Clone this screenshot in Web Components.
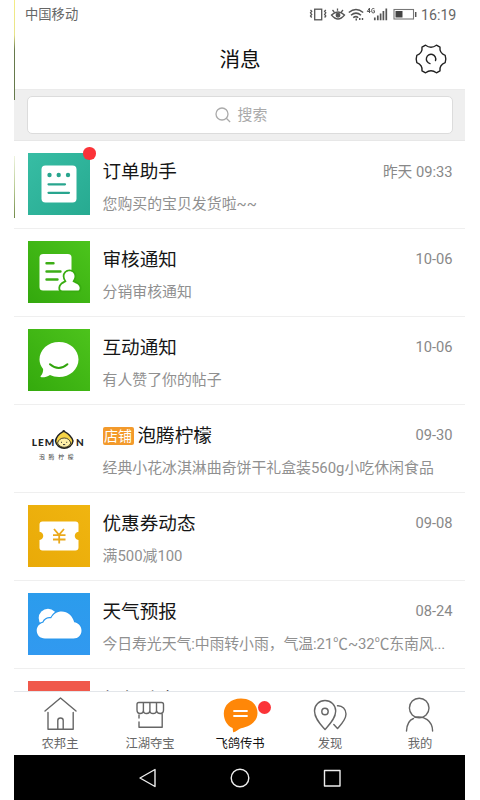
<!DOCTYPE html>
<html lang="zh-CN">
<head>
<meta charset="utf-8">
<title>消息</title>
<style>
html,body{margin:0;height:800px;background:#fff;overflow:hidden}
body{font-family:Roboto,"Noto Sans CJK SC",sans-serif}
</style>
</head>
<body>
<message-app></message-app>
<script>
const define = (name, html, setup) => customElements.define(name, class extends HTMLElement {
  constructor(){
    super();
    const t = document.createElement('template');
    t.innerHTML = html;
    this.attachShadow({mode:'open'}).append(t.content.cloneNode(true));
  }
  connectedCallback(){ if(setup) setup(this, this.shadowRoot); }
});

define('status-bar', `<style>
:host{display:flex;align-items:center;height:29px;padding:0 9px 0 11px;color:#666;font-size:13.3px;line-height:30px}
.carrier{flex:1}
svg{display:block;margin-right:4px}
.time{font-size:14.2px;width:35px;white-space:nowrap}
</style>
<span class="carrier">中国移动</span>
<svg width="108" height="20" viewBox="309 4.500 108 20" fill="none" stroke="#555" stroke-width="1.3">
  <rect x="314.7" y="8.7" width="7" height="10.6"/>
  <path d="M310.5 9.5l1.2 1.3-1.2 1.5 1.2 1.6-1.2 1.5 1.2 1.6M325.8 9.5l-1.2 1.3 1.2 1.5-1.2 1.6 1.2 1.5-1.2 1.6"/>
  <path d="M331.5 14.5q6.5-6 13 0q-6.500 8-13 0zM337.500 8v2.300M332.500 9.500l1.700 2M343 9.500l-1.700 2"/>
  <circle cx="338" cy="14.800" r="1.800" fill="#555"/>
  <path d="M348.800 12q7.200-6 14.400 0M351 14.700q5-4.200 10 0M353.200 17.200q2.800-2.200 5 0" stroke-width="1.500"/>
  <path d="M355.500 19h1.500M359 18.500h1.500M361.800 18.500h1.400" stroke-width="2"/>
  <path d="M374.800 17v2.700M377.800 15v4.700M380.600 13v6.700M383.400 10.500v9.200M386.300 8v11.700" stroke-width="1.700"/>
  <rect x="394" y="9" width="19.500" height="9.500" stroke="#777" stroke-width="1.100"/>
  <path d="M395.500 10.500h7v6.500h-7z" fill="#444" stroke="none"/>
  <path d="M415.700 11.500v5" stroke-width="1.500"/>
  <path d="M369.500 12.500V7.500l-2.200 3.500h3.200M374.400 8.300q-2.700-1.200-2.700 1.900t2.700 1.900v-1.900h-1.100" stroke-width="1"/>
</svg>
<span class="time">16:19</span>`);

define('page-header', `<style>
:host{display:grid;grid-template-columns:1fr auto 1fr;align-items:center;height:61px;box-sizing:border-box;border-bottom:1px solid #ebebeb}
h1{grid-column:2;margin:2px 0 0 1px;font-size:20.6px;font-weight:400;line-height:30px;color:#111}
svg{justify-self:end;margin-right:17px;display:block}
</style>
<h1><slot></slot></h1>
<svg width="34" height="34" viewBox="0 0 34 34" fill="none" stroke="#222" stroke-width="1.400" stroke-linejoin="round" stroke-linecap="round">
  <path d="M11.600 3.200Q17 7.200 22.400 3.200L26 5.200C25.500 9 27.500 12 31.200 13.400Q32.400 17 31.200 20.600C27.500 22 25.500 25 26 28.800L22.400 30.800Q17 26.800 11.600 30.800L8 28.800C8.500 25 6.500 22 2.800 20.600Q1.600 17 2.800 13.400C6.500 12 8.500 9 8 5.200Z"/>
  <path d="M16 21.600A4.700 4.700 0 1 1 21.500 18.500"/>
</svg>`);

define('search-bar', `<style>
:host{display:block;background:#efefef;height:51px;box-sizing:border-box;padding:6px 12px 7px 13px;border-bottom:1px solid #e7e7e7}
div{height:38px;box-sizing:border-box;border:1px solid #dcdcdc;border-radius:5px;background:#fff;display:flex;align-items:center;justify-content:center;gap:7px;font-size:14.900px;color:#aaa;line-height:37px;padding-left:2px}
span{padding-top:1px}
svg{display:block}
</style>
<div><svg width="16" height="16" viewBox="0 0 16 16" fill="none" stroke="#aaa" stroke-width="1.300"><circle cx="7" cy="7" r="6"/><path d="M11.300 11.300l3.800 3.700"/></svg><span><slot></slot></span></div>`);

const art = {
order:`<defs><linearGradient id="g" x2="1" y2="1"><stop stop-color="#37bda4"/><stop offset="1" stop-color="#27aa91"/></linearGradient></defs><path fill="url(#g)" d="M0 0h62v62H0z"/><rect x="13.500" y="12.500" width="35" height="37" rx="4" fill="#fff"/><g fill="#28a58e"><circle cx="21.500" cy="22" r="2.200"/><circle cx="30.700" cy="22" r="2.200"/><circle cx="40" cy="22" r="2.200"/></g><path d="M20.500 31.300h16.500M20.500 39.800H41" stroke="#28a58e" stroke-width="2.200" stroke-linecap="round"/>`,
audit:`<defs><linearGradient id="g" x1="1" x2="0" y2="1"><stop stop-color="#4cc41c"/><stop offset="1" stop-color="#33a80d"/></linearGradient></defs><path fill="url(#g)" d="M0 0h62v62H0z"/><rect x="11.500" y="13" width="32" height="36.500" rx="3.500" fill="#fff"/><path d="M18.500 22.300h7M18.500 30.500h14M18.500 38.500h11" stroke="#3cae16" stroke-width="2.400" stroke-linecap="round"/><path d="M41.500 30.300c3 0 5 2.200 5 4.900 0 2-1.100 3.600-2 5 0 1.500 6.700 2 7.200 6.500 0 2.200-.8 2.800-2 2.800H34.500c-1.800 0-2.500-1-2.300-2.800.5-4.500 6.300-5 6.300-6.500-1-1.400-2-3-2-5 0-2.700 2-4.900 5-4.900z" fill="#fff" stroke="#38ad10" stroke-width="3.600" paint-order="stroke"/>`,
chat:`<defs><linearGradient id="g" x1="1" x2="0" y2="1"><stop stop-color="#4dc31c"/><stop offset="1" stop-color="#34aa0d"/></linearGradient></defs><path fill="url(#g)" d="M0 0h62v62H0z"/><path d="M31 13c11 0 19.500 7.700 19.500 17.500S42 48 31 48c-3.500 0-6.500-.7-9-2-2.500 1.500-5.600 2.500-8.500 2.300-1.200-.2-1.200-1.200-.4-1.900 1.400-1.400 2.200-4 2-6.400-2.300-3-3.600-6-3.600-9.500C11.500 20.700 20 13 31 13z" fill="#fff"/><path d="M22 35.200q8.700 7.600 17.400 0" fill="none" stroke="#31a40c" stroke-width="2" stroke-linecap="round"/>`,
lemon:`<g fill="#222" font-family="Lato,sans-serif" font-weight="900" font-size="10"><text x="3.800" y="29.300" textLength="22.500" lengthAdjust="spacing">LEM</text><text x="48" y="29.300">N</text></g><path d="M27.500 24c1-5 5-8 7.500-9.300 0-1.200 1.200-1.200 1.500 0C39.500 16.300 43.500 19 45 24c-.5 4.500-5 7.300-8.800 7.300S28 28.500 27.500 24z" fill="#f6d447" stroke="#222" stroke-width="1.500"/><path d="M29.500 26c1-3 3-5 6.700-5s5.600 2 6.600 5c-1 2.800-4 4.300-6.600 4.300s-5.700-1.500-6.700-4.300z" fill="#fff0a8" stroke="#222" stroke-width=".8"/><path d="M33 25.300h1M38.200 25.300h1M35 27.600h2.200" stroke="#333" stroke-width="1"/><text x="11" y="42" font-size="5.800" fill="#444" textLength="34.500" font-family="Noto Sans CJK SC,sans-serif">泡腾柠檬</text>`,
coupon:`<defs><linearGradient id="g" x1="1" x2="0" y2="1"><stop stop-color="#f0b510"/><stop offset="1" stop-color="#e9aa08"/></linearGradient></defs><path fill="url(#g)" d="M0 0h62v62H0z"/><path d="M14.500 16.500h33c1.900 0 3 1.100 3 3v7.200c-5 .8-5 7.500 0 8.300v7.500c0 1.900-1.100 3-3 3h-33c-1.900 0-3-1.100-3-3V35c5-.8 5-7.500 0-8.300v-7.200c0-1.900 1.100-3 3-3z" fill="#fff"/><path d="M26 24l5 5.800L36 24M31.200 30v8.500M25 30.200h12.500M25 34.500h12.500" fill="none" stroke="#eaa91c" stroke-width="1.800"/>`,
weather:`<defs><linearGradient id="g" x2="0" y2="1"><stop stop-color="#2b9cec"/><stop offset="1" stop-color="#3199f0"/></linearGradient></defs><path fill="url(#g)" d="M0 0h62v62H0z"/><circle cx="20" cy="25" r="9.300" fill="#fff"/><path d="M17 45.500c-5 0-8.300-3.600-8.300-8 0-4 3-7 6.500-7.700 1.200-3.600 4.500-5.200 8-4.500 2-4.100 6-6.800 10.500-6.800 6 0 11 4.500 12.500 10.700 4.200.6 7.300 4 7.300 8.300 0 4.700-3.300 8-8 8z" fill="#fff" stroke="#2b98ed" stroke-width="2.400" paint-order="stroke"/>`,
red:`<path fill="#f0594b" d="M0 0h62v62H0z"/>`
};

define('message-row', `<style>
:host{display:flex;height:88px;box-sizing:border-box;padding:12px 12.500px 0 13.500px;border-bottom:1px solid #efefef;gap:13px}
.icon{position:relative;width:62px;height:62px;flex:none}
.icon svg{display:block}
.dot{position:absolute;right:-6px;top:-6px;width:12.500px;height:12.500px;border-radius:50%;background:#fb3338}
.body{flex:1;min-width:0;display:flex;flex-direction:column;padding-top:4px}
.top{display:flex;align-items:center;height:27px}
.title{flex:1;display:flex;align-items:center;gap:4px;font-size:18.600px;color:#161616;line-height:27px;padding-top:4px}
.tag{background:#f39a2b;color:#fff;border-radius:2px;font-size:14px;line-height:18px;height:18px;width:31px;text-align:center;margin-top:-2px}
.time{font-size:14.700px;color:#888}
.sub{margin-top:9px;margin-right:-4px;font-size:14.900px;line-height:22px;color:#909090;white-space:nowrap}
:host([tight]) .sub{letter-spacing:-.1px}
</style>
<div class="icon"></div>
<div class="body"><div class="top"><div class="title"></div><span class="time"></span></div><div class="sub"><slot></slot></div></div>`, (el, root) => {
  root.querySelector('.icon').innerHTML = `<svg width="62" height="62" viewBox="0 0 62 62">${art[el.getAttribute('icon')]}</svg>` + (el.hasAttribute('unread') ? '<i class="dot"></i>' : '');
  root.querySelector('.title').innerHTML = (el.hasAttribute('tag') ? `<span class="tag">${el.getAttribute('tag')}</span>` : '') + `<span>${el.getAttribute('name')}</span>`;
  root.querySelector('.time').textContent = el.getAttribute('time') || '';
});

const tabs = {
home:`<path d="M44.500 711L60 698l15.500 13M47.500 712.500v16.700h25.200v-16.700M57.300 729v-8.500q0-2.500 2.700-2.500t2.700 2.500v8.500"/>`,
shop:`<path d="M138.500 702.500h22.500q2 0 2 2v5.500q0 3.500-3.300 3.500T156 710.500q0 3-3.400 3t-3.200-3q0 3-3.300 3t-3.200-3q0 3-3.200 3t-3.200-3.500v-5.500q0-2 1.800-2zM142.900 703v7.500M149.400 703v7.500M156 703v7.500M138.500 715v3M138.500 722v5.300h23.200v-13"/>`,
chat:`<path d="M241 698.500c10 0 16.500 6.200 16.500 14.500 0 9-8.500 14-16.500 15.300-2 .4-5 3.700-7.200 4-1.300 0-.6-2.900-1.300-4.300-5.500-2.300-8.700-8.300-8.700-14.500 0-8.300 7-15 17.200-15z" fill="#ff8708" stroke="none"/><path d="M234 711h13M234 716h13" stroke="#fff" stroke-width="1.800"/>`,
find:`<path d="M325 729.500c-4.500-5.200-10.500-11-10.500-18.500 0-6.200 4.700-10.500 10.500-10.500s10.700 4.300 10.700 10.500c0 7.500-6.200 13.300-10.700 18.500z"/><circle cx="325" cy="711.500" r="3.200"/><path d="M337.500 705.800c5-.3 8.500 3.700 8.500 8.200 0 5.800-5 10.500-8.500 14.500l-3.700-4"/>`,
me:`<circle cx="419.200" cy="708" r="9.800"/><path d="M406.500 731c.3-6.500 3-11 7-12.500M415 717.300c9-2 17.600 3.500 17.600 13.700"/>`
};
const tabCentre = {home:59.5,shop:149.5,chat:240,find:330,me:420};
define('tab-item', `<style>
:host{display:flex;flex-direction:column;align-items:center;flex:1;color:#666;font-size:12.300px;position:relative}
:host([active]){color:#111}
svg{display:block;flex:none;fill:none;stroke:#666;stroke-width:1.400;stroke-linecap:round;stroke-linejoin:round}
span{line-height:18px;padding-top:2px}
.dot{position:absolute;left:calc(50% + 18px);top:8.500px;width:13px;height:13px;border-radius:50%;background:#fb3338}
</style><svg width="44" height="41"></svg><span><slot></slot></span>`, (el, root) => {
  const k = el.getAttribute('icon'), svg = root.querySelector('svg');
  svg.setAttribute('viewBox', `${tabCentre[k]-22} 692 44 41`);
  svg.innerHTML = tabs[k];
  if(el.hasAttribute('unread')) root.append(Object.assign(document.createElement('i'),{className:'dot'}));
});
define('tab-bar', `<style>:host{display:flex;height:64px;box-sizing:border-box;border-top:1px solid #e3e6ea;background:#fff;padding-left:1px}</style><slot></slot>`);

define('system-nav', `<style>
:host{display:flex;height:45px;background:#000;align-items:center;justify-content:center;gap:68px}
svg{display:block;fill:none;stroke:#eee;stroke-width:1.400;stroke-linejoin:round}
</style>
<svg width="24" height="24" viewBox="0 0 24 24"><path d="M4 12L19 3.500v17z"/></svg>
<svg width="24" height="24" viewBox="0 0 24 24"><circle cx="12" cy="12" r="8.800"/></svg>
<svg width="24" height="24" viewBox="0 0 24 24"><path d="M4.500 4.500h15.500v15.500H4.500z"/></svg>`);

define('message-app', `<style>
:host{display:flex;flex-direction:column;width:451px;height:800px;margin-left:14px;background:#fff;position:relative}
.list{flex:1;min-height:0;overflow:hidden}
.edge{position:absolute;left:0;width:1px}
.a{top:0;height:100px;background:linear-gradient(#f4ec86 0,#e7e38a 35%,#66794b 50%,#667a4c)}
.b{top:156px;height:62px;background:linear-gradient(#eef4df,#b9cc94 50%,#718a49)}
</style>
<status-bar></status-bar>
<page-header>消息</page-header>
<search-bar>搜索</search-bar>
<div class="list">
<message-row icon="order" name="订单助手" time="昨天 09:33" unread>您购买的宝贝发货啦~~</message-row>
<message-row icon="audit" name="审核通知" time="10-06">分销审核通知</message-row>
<message-row icon="chat" name="互动通知" time="10-06">有人赞了你的帖子</message-row>
<message-row icon="lemon" tag="店铺" name="泡腾柠檬" time="09-30">经典小花冰淇淋曲奇饼干礼盒装560g小吃休闲食品</message-row>
<message-row icon="coupon" name="优惠券动态" time="09-08">满500减100</message-row>
<message-row icon="weather" name="天气预报" time="08-24" tight>今日寿光天气:中雨转小雨，气温:21℃~32℃东南风...</message-row>
<message-row icon="red" name="红包动态"></message-row>
</div>
<tab-bar>
<tab-item icon="home">农邦主</tab-item>
<tab-item icon="shop">江湖夺宝</tab-item>
<tab-item icon="chat" active unread>飞鸽传书</tab-item>
<tab-item icon="find">发现</tab-item>
<tab-item icon="me">我的</tab-item>
</tab-bar>
<system-nav></system-nav>
<i class="edge a"></i><i class="edge b"></i>`);
</script>
</body>
</html>
